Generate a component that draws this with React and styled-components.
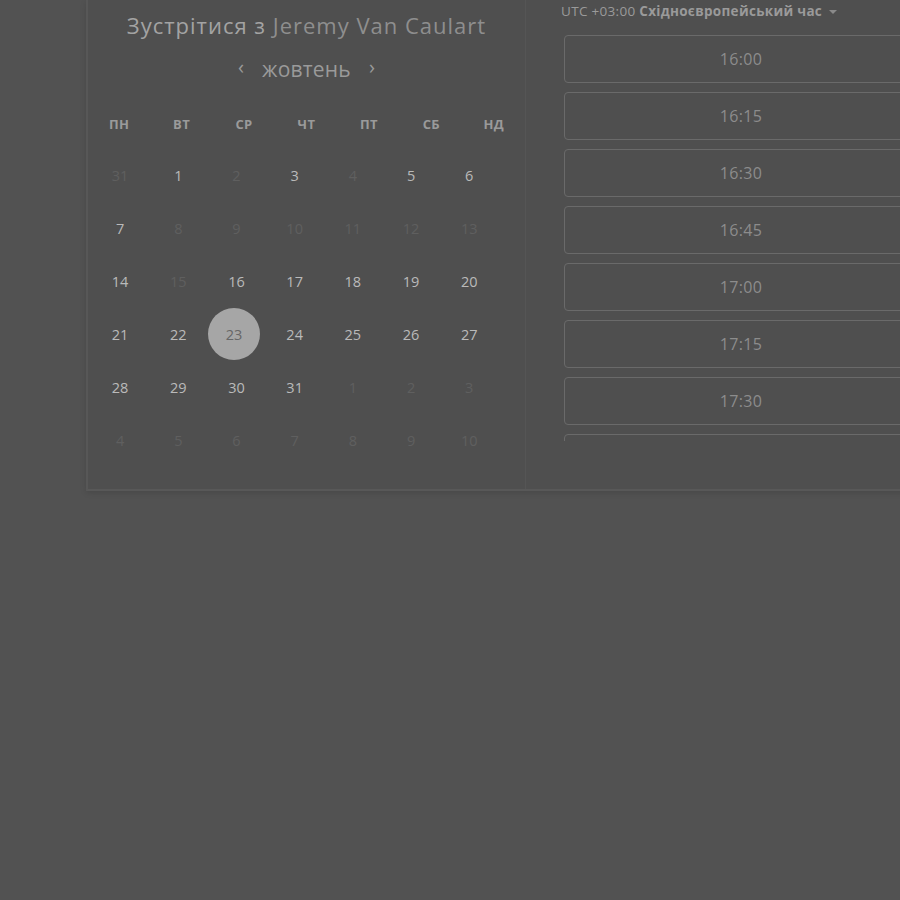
import React from "react";
import styled, { createGlobalStyle } from "styled-components";

const GlobalStyle = createGlobalStyle`
  html, body {
    margin: 0;
    padding: 0;
    background: #525252;
    overflow: hidden;
    font-family: "Open Sans", "Noto Sans", sans-serif;
  }
`;

const weekdays = ["пн", "вт", "ср", "чт", "пт", "сб", "нд"];

// [число, доступний, стан]
const weeks = [
  [[31, false], [1, true], [2, false], [3, true], [4, false], [5, true], [6, true]],
  [[7, true], [8, false], [9, false], [10, false], [11, false], [12, false], [13, false]],
  [[14, true], [15, false], [16, true], [17, true], [18, true], [19, true], [20, true]],
  [[21, true], [22, true], [23, true, "selected"], [24, true], [25, true], [26, true], [27, true]],
  [[28, true], [29, true], [30, true], [31, true], [1, false], [2, false], [3, false]],
  [[4, false], [5, false], [6, false], [7, false], [8, false], [9, false], [10, false]],
];

const slots = ["16:00", "16:15", "16:30", "16:45", "17:00", "17:15", "17:30"];

const Page = styled.div`
  width: 900px;
  height: 900px;
  overflow: hidden;
`;

const Card = styled.div`
  margin-left: 86px;
  width: 880px;
  height: 491px;
  display: flex;
  background: #4f4f4f;
  border-left: 2px solid #575757;
  border-bottom: 2px solid #585858;
  box-shadow: 0 2px 6px rgba(0, 0, 0, 0.12);
  box-sizing: border-box;
`;

const CalendarPanel = styled.div`
  width: 438px;
  flex-shrink: 0;
  border-right: 1px solid #555;
  padding-top: 10px;
  box-sizing: border-box;
`;

const Title = styled.h1`
  margin: 0;
  text-align: center;
  font-size: 22px;
  line-height: 30px;
  font-weight: 500;
  color: #a3a3a3;
  letter-spacing: 1px;
  white-space: nowrap;
`;

const Host = styled.span`
  font-weight: 400;
  color: #8e8e8e;
`;

const MonthNav = styled.div`
  display: flex;
  justify-content: center;
  align-items: center;
  gap: 14px;
  margin-top: 14px;
  height: 30px;
`;

const Chevron = styled.span`
  font-size: 20px;
  color: #9a9a9a;
  line-height: 1;
  padding: 0 4px;
  margin-top: -4px;
`;

const Month = styled.span`
  font-size: 21px;
  color: #9a9a9a;
  letter-spacing: 0.2px;
`;

const WeekHeader = styled.div`
  display: grid;
  grid-template-columns: repeat(7, 1fr);
  margin-top: 25px;
  height: 30px;
  align-items: center;
`;

const WeekdayLabel = styled.span`
  text-align: center;
  text-transform: uppercase;
  font-size: 13px;
  font-weight: 700;
  color: #9a9a9a;
  letter-spacing: 0.4px;
`;

const DaysGrid = styled.div`
  display: grid;
  grid-template-columns: repeat(7, 58.2px);
  grid-auto-rows: 53px;
  margin: 10px 0 0 3px;
`;

const DayCell = styled.div`
  display: flex;
  justify-content: center;
  align-items: center;
`;

const Day = styled.span`
  width: 52px;
  height: 52px;
  border-radius: 50%;
  display: flex;
  justify-content: center;
  align-items: center;
  font-size: 14.5px;
  color: ${({ $available }) => ($available ? "#bababa" : "#5f5f5f")};
  background: ${({ $selected }) => ($selected ? "#a6a6a6" : "transparent")};
  ${({ $selected }) => $selected && "color: #676767; margin-left: -5px; margin-top: -1px;"}
`;

const SlotsPanel = styled.div`
  flex: 1;
  padding: 0 0 0 38px;
  box-sizing: border-box;
`;

const TimeZone = styled.div`
  height: 22px;
  line-height: 22px;
  font-size: 13.5px;
  color: #9a9a9a;
  letter-spacing: 0.3px;
  margin-left: -3px;
  white-space: nowrap;
`;

const ZoneName = styled.strong`
  font-weight: 700;
`;

const Caret = styled.span`
  display: inline-block;
  margin-left: 7px;
  width: 0;
  height: 0;
  border-left: 4px solid transparent;
  border-right: 4px solid transparent;
  border-top: 4px solid #8a8a8a;
  vertical-align: middle;
`;

const SlotList = styled.div`
  margin-top: 13px;
  height: 406px;
  overflow: hidden;
  display: flex;
  flex-direction: column;
  gap: 9px;
`;

const Slot = styled.div`
  width: 354px;
  height: 48px;
  flex-shrink: 0;
  box-sizing: border-box;
  border: 1px solid #6a6a6a;
  border-radius: 4px;
  display: flex;
  justify-content: center;
  align-items: center;
  font-size: 16px;
  color: #8c8c8c;
  letter-spacing: 0.3px;
`;

export default function App() {
  return (
    <Page>
      <GlobalStyle />
      <Card>
        <CalendarPanel>
          <Title>
            Зустрітися з <Host>Jeremy Van Caulart</Host>
          </Title>
          <MonthNav>
            <Chevron>‹</Chevron>
            <Month>жовтень</Month>
            <Chevron>›</Chevron>
          </MonthNav>
          <WeekHeader>
            {weekdays.map((d) => (
              <WeekdayLabel key={d}>{d}</WeekdayLabel>
            ))}
          </WeekHeader>
          <DaysGrid>
            {weeks.flat().map(([n, available, state], i) => (
              <DayCell key={i}>
                <Day $available={available} $selected={state === "selected"}>
                  {n}
                </Day>
              </DayCell>
            ))}
          </DaysGrid>
        </CalendarPanel>
        <SlotsPanel>
          <TimeZone>
            UTC +03:00 <ZoneName>Східноєвропейський час</ZoneName>
            <Caret />
          </TimeZone>
          <SlotList>
            {slots.map((t) => (
              <Slot key={t}>{t}</Slot>
            ))}
            {/* наступний слот, що виглядає з-під краю списку */}
            <Slot />
          </SlotList>
        </SlotsPanel>
      </Card>
    </Page>
  );
}
